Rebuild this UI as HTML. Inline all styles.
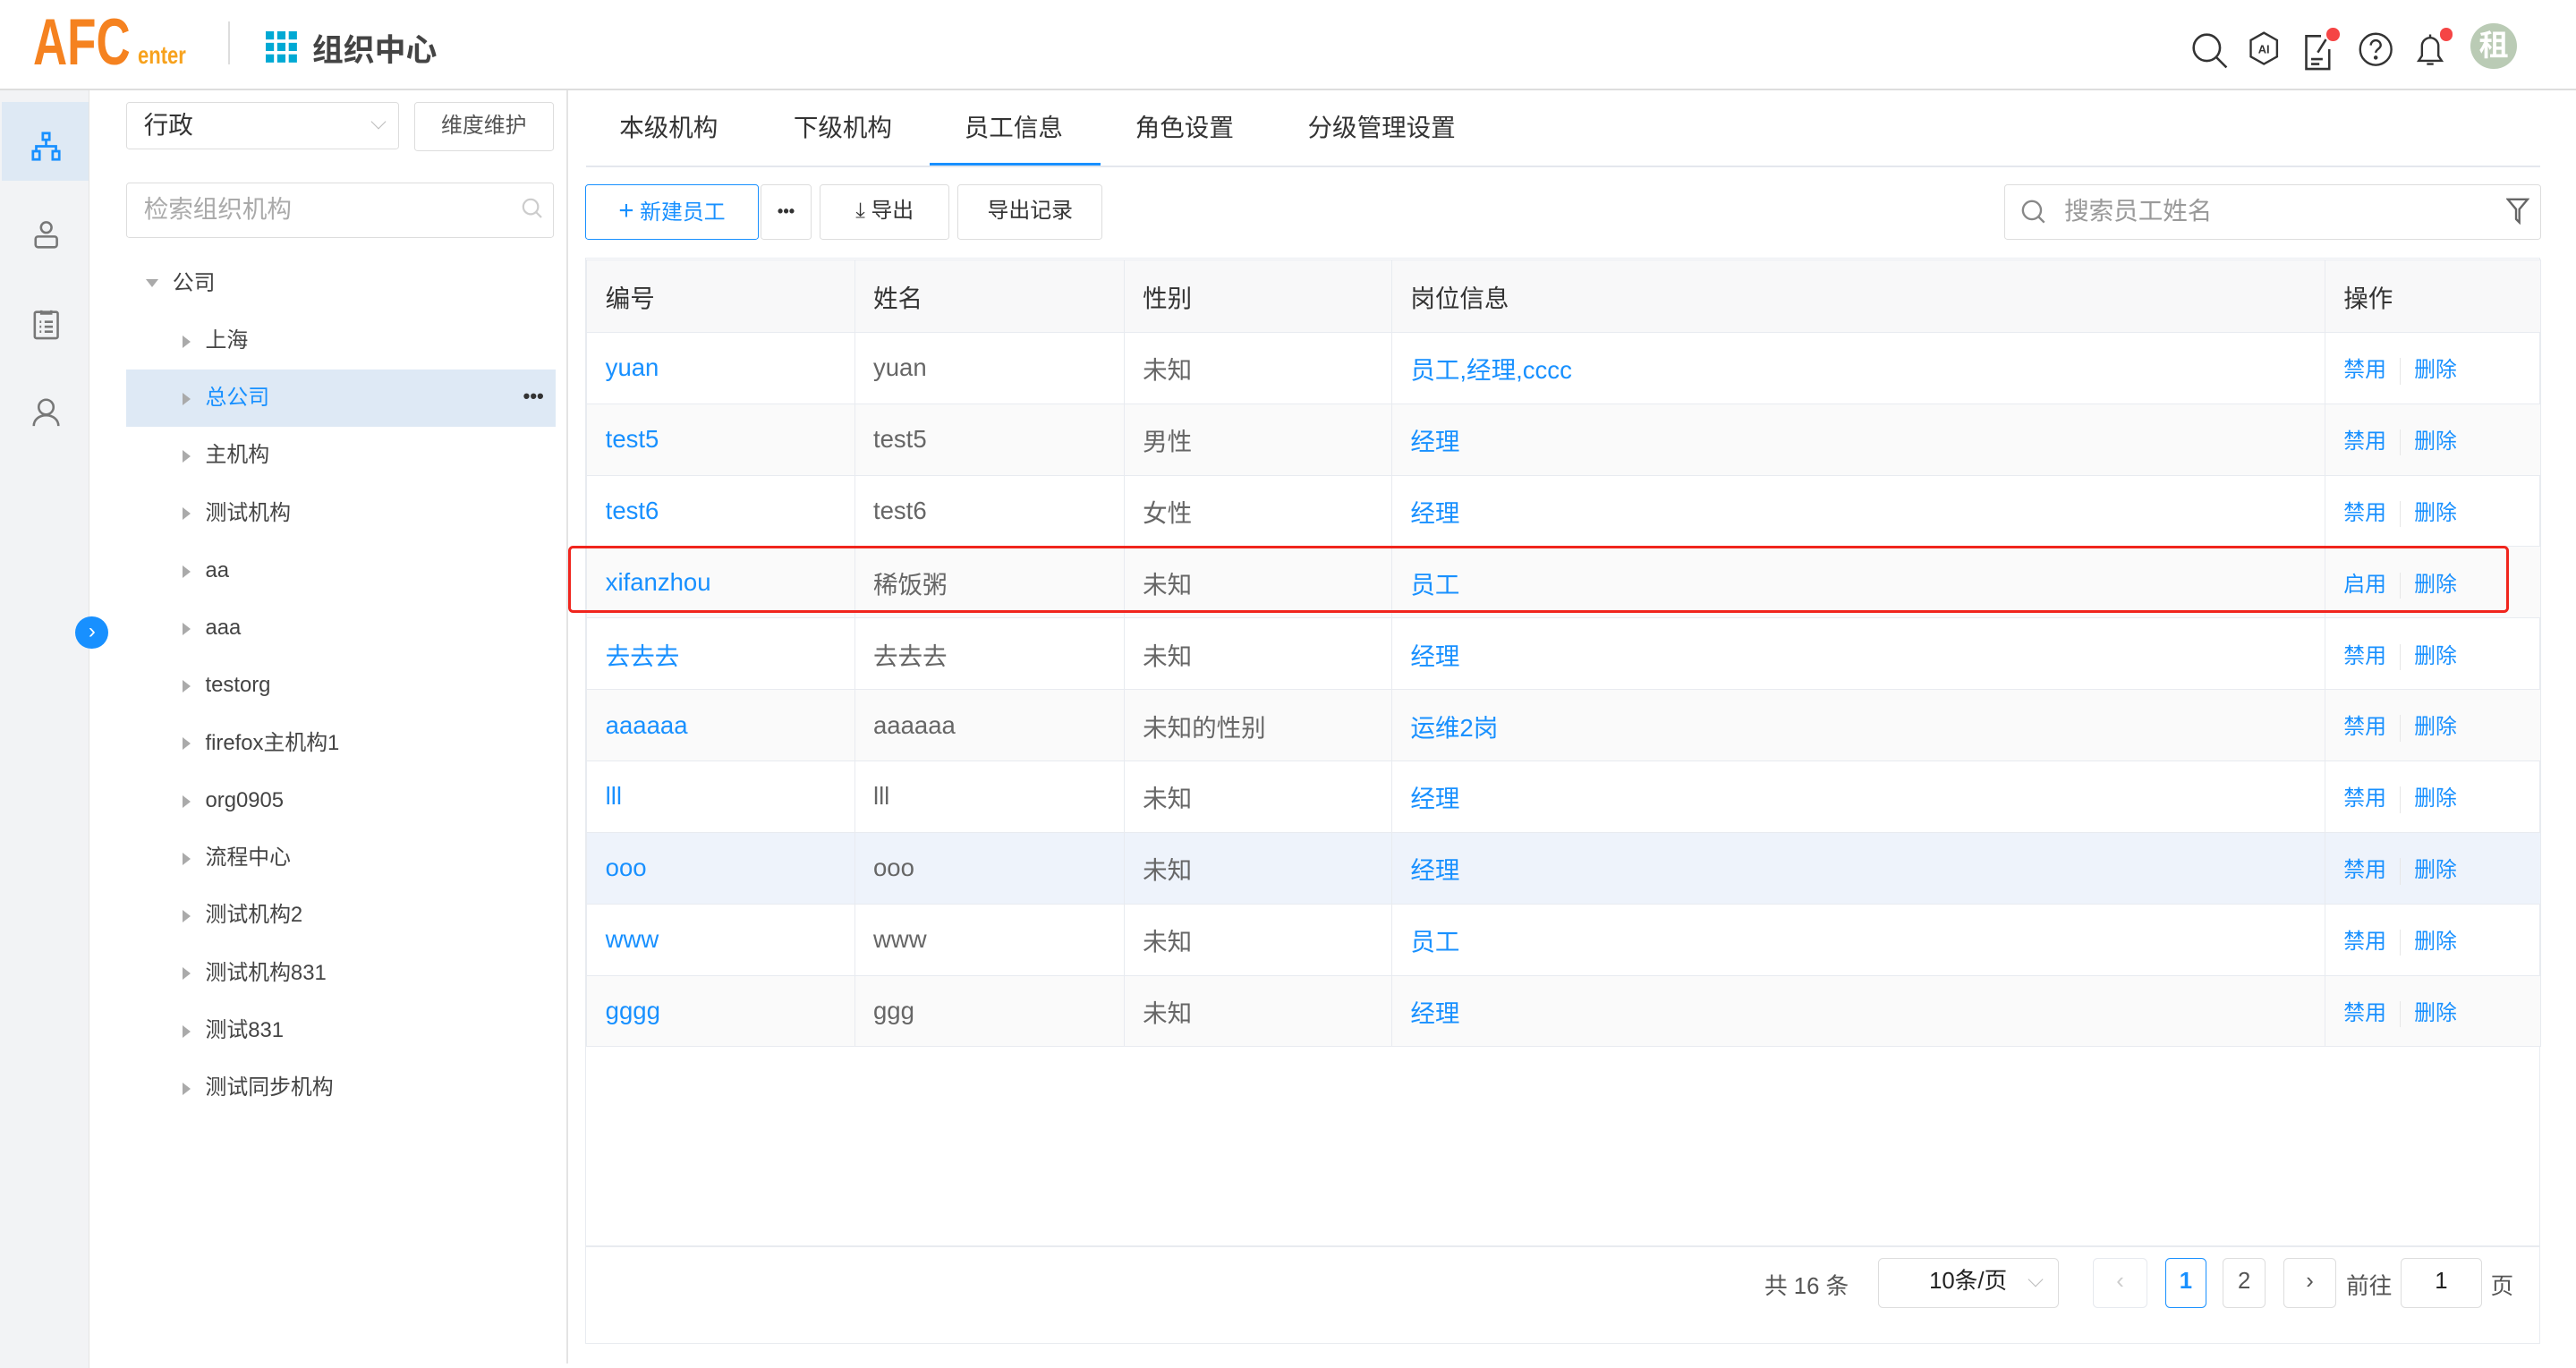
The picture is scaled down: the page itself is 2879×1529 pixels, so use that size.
<!DOCTYPE html>
<html><head><meta charset="utf-8"><style>
html,body{margin:0;padding:0;background:#fff;overflow:hidden}
#root{zoom:1.83610;width:1568px;height:833px;position:relative;font-family:"Liberation Sans","Noto Sans CJK SC",sans-serif;color:#333}
.a{position:absolute}
.blue{color:#1890ff}
.tree .it{position:absolute;left:77px;width:261px;height:35px;line-height:35px;font-size:13px;color:#444}
.tree .it span.c{position:absolute;left:34px;top:14px;width:0;height:0;border-left:5px solid #aaa;border-top:4px solid transparent;border-bottom:4px solid transparent}
.tree .it span.t{position:absolute;left:48px}
.tab{position:absolute;top:62px;height:39px;line-height:32px;font-size:15px;color:#333}
.btn{position:absolute;top:112px;height:34px;border:1px solid #ddd;border-radius:2px;box-sizing:border-box;font-size:13px;line-height:32px;text-align:center;color:#333}
table{position:absolute;left:357px;top:158px;border-collapse:collapse;font-size:15px;table-layout:fixed}
td{border:1px solid #e8ebf0;height:43.5px;padding:0 0 0 11px;box-sizing:border-box}
tr.h td{background:#f8f8f9;height:44px;color:#333}
tr.s td{background:#fafafa}
tr.hl td{background:#eef3fb}
td.n{color:#666}
.op{font-size:13px;color:#1890ff}
.op i{display:inline-block;width:1px;height:16px;background:#e6e6e6;vertical-align:middle;margin:0 8px}
.pg{position:absolute;top:766px;height:30px;border:1px solid #ddd;border-radius:3px;box-sizing:border-box;text-align:center;line-height:28px;font-size:14px;color:#555}
.chev{position:absolute;width:6px;height:6px;border-right:1px solid #bbb;border-bottom:1px solid #bbb;transform:rotate(45deg)}
</style></head><body><div id="root">
<!-- header -->
<div class="a" style="left:20px;top:4px;font-weight:bold;font-size:40px;line-height:44px;color:#f58220;transform:scaleX(0.72);transform-origin:left">AFC</div>
<div class="a" style="left:84px;top:25px;font-weight:bold;font-size:15px;color:#f7a21d;transform:scaleX(0.8);transform-origin:left">enter</div>
<div class="a" style="left:139px;top:13px;width:1px;height:26px;background:#ddd"></div>
<svg class="a" style="left:162px;top:19px" width="20" height="19" viewBox="0 0 20 19"><g fill="#00a9d4"><rect x="0" y="0" width="5" height="5"/><rect x="7" y="0" width="5" height="5"/><rect x="14" y="0" width="5" height="5"/><rect x="0" y="7" width="5" height="5"/><rect x="7" y="7" width="5" height="5"/><rect x="14" y="7" width="5" height="5"/><rect x="0" y="14" width="5" height="5"/><rect x="7" y="14" width="5" height="5"/><rect x="14" y="14" width="5" height="5"/></g></svg>
<div class="a" style="left:190px;top:16px;font-size:19px;font-weight:bold;color:#444">组织中心</div>
<svg class="a" style="left:1333px;top:19px" width="24" height="24" viewBox="0 0 24 24" fill="none" stroke="#333" stroke-width="1.4"><circle cx="10" cy="10" r="8"/><path d="M16 16l6 6"/></svg>
<svg class="a" style="left:1367px;top:18px" width="22" height="24" viewBox="0 0 22 24" fill="none" stroke="#333" stroke-width="1.3"><path d="M11 2l8 4.5v10L11 21 3 16.5v-10z"/><text x="11" y="14.5" font-size="7" font-weight="bold" fill="#333" stroke="none" text-anchor="middle" font-family="Liberation Sans">AI</text></svg>
<svg class="a" style="left:1401px;top:18px" width="24" height="26" viewBox="0 0 24 26" fill="none" stroke="#333" stroke-width="1.4"><path d="M12 4H3v20h14V12"/><path d="M10 14l5-8"/><path d="M6 18h7M6 21h5"/></svg>
<div class="a" style="left:1416px;top:17px;width:8px;height:8px;border-radius:50%;background:#f54545"></div>
<svg class="a" style="left:1435px;top:19px" width="22" height="22" viewBox="0 0 22 22" fill="none" stroke="#333" stroke-width="1.3"><circle cx="11" cy="11" r="9.5"/><path d="M8 8.5a3 3 0 116 0c0 2-3 2.5-3 4.5"/><circle cx="11" cy="16" r=".6" fill="#333"/></svg>
<svg class="a" style="left:1467px;top:18px" width="24" height="24" viewBox="0 0 24 24" fill="none" stroke="#333" stroke-width="1.3"><path d="M5 19h14l-2-3v-6a5 5 0 00-10 0v6z"/><path d="M10 21h4M12 3v2"/></svg>
<div class="a" style="left:1485px;top:17px;width:8px;height:8px;border-radius:50%;background:#f54545"></div>
<div class="a" style="left:1504px;top:14px;width:28px;height:28px;border-radius:50%;background:#bacbb5;color:#fff;font-weight:bold;font-size:18px;text-align:center;line-height:28px">租</div>
<div class="a" style="left:0;top:54px;width:1568px;height:1px;background:#ddd"></div>
<!-- left nav -->
<div class="a" style="left:0;top:55px;width:54px;height:778px;background:#f2f3f5;border-right:1px solid #e4e4e4"></div>
<div class="a" style="left:1px;top:62px;width:53px;height:48px;background:#dee9f4"></div>
<svg class="a" style="left:19px;top:80px" width="18" height="18" viewBox="0 0 18 18" fill="none" stroke="#1890ff" stroke-width="1.5"><rect x="7" y="1" width="4" height="4"/><rect x="1" y="12" width="4" height="5"/><rect x="13" y="12" width="4" height="5"/><path d="M9 5v4M3 12V9h12v3"/></svg>
<svg class="a" style="left:20px;top:134px" width="16" height="18" viewBox="0 0 16 18" fill="none" stroke="#777" stroke-width="1.4"><circle cx="8" cy="4.5" r="3.2"/><rect x="1.5" y="10" width="13" height="6.5" rx="1.5"/></svg>
<svg class="a" style="left:20px;top:188px" width="16" height="19" viewBox="0 0 16 19" fill="none" stroke="#777" stroke-width="1.4"><rect x="1" y="2" width="14" height="16" rx="1"/><path d="M5 1v2h6V1M4 8h1M7 8h5M4 11h1M7 11h5M4 14h1M7 14h5"/></svg>
<svg class="a" style="left:19px;top:242px" width="18" height="18" viewBox="0 0 18 18" fill="none" stroke="#777" stroke-width="1.4"><circle cx="9" cy="6" r="4.5"/><path d="M1.5 17.5c0-4 3.5-6.5 7.5-6.5s7.5 2.5 7.5 6.5"/></svg>
<div class="a" style="left:46px;top:375px;width:20px;height:20px;border-radius:50%;background:#1890ff;color:#fff;text-align:center;line-height:19px;font-size:13px">›</div>
<!-- tree panel -->
<div class="a" style="left:345px;top:55px;width:1px;height:775px;background:#e4e4e4"></div>
<div class="a" style="left:77px;top:62px;width:166px;height:29px;border:1px solid #ddd;border-radius:2px;box-sizing:border-box;font-size:15px;line-height:27px;padding-left:10px">行政<span class="chev" style="right:9px;top:8px"></span></div>
<div class="btn" style="left:252px;top:62px;width:85px;height:30px;line-height:28px;color:#555">维度维护</div>
<div class="a" style="left:77px;top:111px;width:260px;height:34px;border:1px solid #ddd;border-radius:2px;box-sizing:border-box;font-size:15px;line-height:32px;padding-left:10px;color:#aaa">检索组织机构
<svg style="position:absolute;right:6px;top:9px" width="13" height="13" viewBox="0 0 13 13" fill="none" stroke="#ccc" stroke-width="1.2"><circle cx="5.5" cy="5.5" r="4.5"/><path d="M9 9l3 3"/></svg></div>
<div class="tree">
<div class="it" style="top:155px"><span style="position:absolute;left:12px;top:15px;border-top:5px solid #aaa;border-left:4px solid transparent;border-right:4px solid transparent"></span><span class="t" style="left:28px">公司</span></div>
<div class="it" style="top:190px"><span class="c"></span><span class="t">上海</span></div>
<div class="it" style="top:225px;background:#dee9f5;color:#1890ff"><span class="c"></span><span class="t">总公司</span><span style="position:absolute;right:7px;top:-1px;color:#333;font-weight:bold;font-size:12px">•••</span></div>
<div class="it" style="top:260px"><span class="c"></span><span class="t">主机构</span></div>
<div class="it" style="top:295px"><span class="c"></span><span class="t">测试机构</span></div>
<div class="it" style="top:330px"><span class="c"></span><span class="t">aa</span></div>
<div class="it" style="top:365px"><span class="c"></span><span class="t">aaa</span></div>
<div class="it" style="top:400px"><span class="c"></span><span class="t">testorg</span></div>
<div class="it" style="top:435px"><span class="c"></span><span class="t">firefox主机构1</span></div>
<div class="it" style="top:470px"><span class="c"></span><span class="t">org0905</span></div>
<div class="it" style="top:505px"><span class="c"></span><span class="t">流程中心</span></div>
<div class="it" style="top:540px"><span class="c"></span><span class="t">测试机构2</span></div>
<div class="it" style="top:575px"><span class="c"></span><span class="t">测试机构831</span></div>
<div class="it" style="top:610px"><span class="c"></span><span class="t">测试831</span></div>
<div class="it" style="top:645px"><span class="c"></span><span class="t">测试同步机构</span></div>
</div>
<!-- tabs -->
<div class="tab" style="left:377px">本级机构</div>
<div class="tab" style="left:483px">下级机构</div>
<div class="tab blue" style="left:587px">员工信息</div>
<div class="tab" style="left:691px">角色设置</div>
<div class="tab" style="left:796px">分级管理设置</div>
<div class="a" style="left:357px;top:101px;width:1189px;height:1px;background:#e4e7ed"></div>
<div class="a" style="left:566px;top:99px;width:104px;height:2px;background:#1890ff"></div>
<!-- toolbar -->
<div class="btn" style="left:356px;width:106px;border-color:#1890ff;color:#1890ff"><span style="font-size:16px">+</span> 新建员工</div>
<div class="btn" style="left:463px;width:31px;font-weight:bold;font-size:10px">•••</div>
<div class="btn" style="left:499px;width:79px">⤓ 导出</div>
<div class="btn" style="left:583px;width:88px">导出记录</div>
<div class="a" style="left:1220px;top:112px;width:327px;height:34px;border:1px solid #ddd;border-radius:2px;box-sizing:border-box;font-size:15px;line-height:32px;padding-left:36px;color:#999">搜索员工姓名
<svg style="position:absolute;left:10px;top:9px" width="15" height="15" viewBox="0 0 15 15" fill="none" stroke="#888" stroke-width="1.3"><circle cx="6.5" cy="6.5" r="5.5"/><path d="M10.5 10.5l3.5 3.5"/></svg>
<svg style="position:absolute;right:7px;top:8px" width="14" height="16" viewBox="0 0 14 16" fill="none" stroke="#666" stroke-width="1.3"><path d="M1 1h12l-5 6v8l-2-2V7z"/></svg></div>
<!-- table frame -->
<div class="a" style="left:356px;top:157px;width:1190px;height:661px;border:1px solid #e8ebf0;box-sizing:border-box"></div>
<table>
<colgroup><col style="width:163px"><col style="width:164px"><col style="width:163px"><col style="width:568px"><col style="width:131px"></colgroup>
<tr class="h"><td>编号</td><td>姓名</td><td>性别</td><td>岗位信息</td><td>操作</td></tr>
<tr><td class="blue">yuan</td><td class="n">yuan</td><td class="n">未知</td><td class="blue">员工,经理,cccc</td><td class="op">禁用<i></i>删除</td></tr>
<tr class="s"><td class="blue">test5</td><td class="n">test5</td><td class="n">男性</td><td class="blue">经理</td><td class="op">禁用<i></i>删除</td></tr>
<tr><td class="blue">test6</td><td class="n">test6</td><td class="n">女性</td><td class="blue">经理</td><td class="op">禁用<i></i>删除</td></tr>
<tr class="s"><td class="blue">xifanzhou</td><td class="n">稀饭粥</td><td class="n">未知</td><td class="blue">员工</td><td class="op">启用<i></i>删除</td></tr>
<tr><td class="blue">去去去</td><td class="n">去去去</td><td class="n">未知</td><td class="blue">经理</td><td class="op">禁用<i></i>删除</td></tr>
<tr class="s"><td class="blue">aaaaaa</td><td class="n">aaaaaa</td><td class="n">未知的性别</td><td class="blue">运维2岗</td><td class="op">禁用<i></i>删除</td></tr>
<tr><td class="blue">lll</td><td class="n">lll</td><td class="n">未知</td><td class="blue">经理</td><td class="op">禁用<i></i>删除</td></tr>
<tr class="hl"><td class="blue">ooo</td><td class="n">ooo</td><td class="n">未知</td><td class="blue">经理</td><td class="op">禁用<i></i>删除</td></tr>
<tr><td class="blue">www</td><td class="n">www</td><td class="n">未知</td><td class="blue">员工</td><td class="op">禁用<i></i>删除</td></tr>
<tr class="s"><td class="blue">gggg</td><td class="n">ggg</td><td class="n">未知</td><td class="blue">经理</td><td class="op">禁用<i></i>删除</td></tr>
</table>
<div class="a" style="left:346px;top:332px;width:1181px;height:41px;border:2px solid #f0251d;border-radius:3px;box-sizing:border-box"></div>
<!-- pagination -->
<div class="a" style="left:357px;top:758px;width:1189px;height:1px;background:#e8ebf0"></div>
<div class="a" style="left:1074px;top:772px;font-size:14px;color:#555">共 16 条</div>
<div class="pg" style="left:1143px;width:110px;color:#222">10条/页<span class="chev" style="right:10px;top:9px"></span></div>
<div class="pg" style="left:1274px;width:33px;color:#ccc;border-color:#e6e9ee">‹</div>
<div class="pg" style="left:1318px;width:25px;border-color:#1890ff;color:#1890ff;font-weight:bold">1</div>
<div class="pg" style="left:1353px;width:26px">2</div>
<div class="pg" style="left:1390px;width:32px">›</div>
<div class="a" style="left:1428px;top:772px;font-size:14px;color:#555">前往</div>
<div class="pg" style="left:1461px;width:50px;color:#222">1</div>
<div class="a" style="left:1516px;top:772px;font-size:14px;color:#555">页</div>
</div></body></html>
